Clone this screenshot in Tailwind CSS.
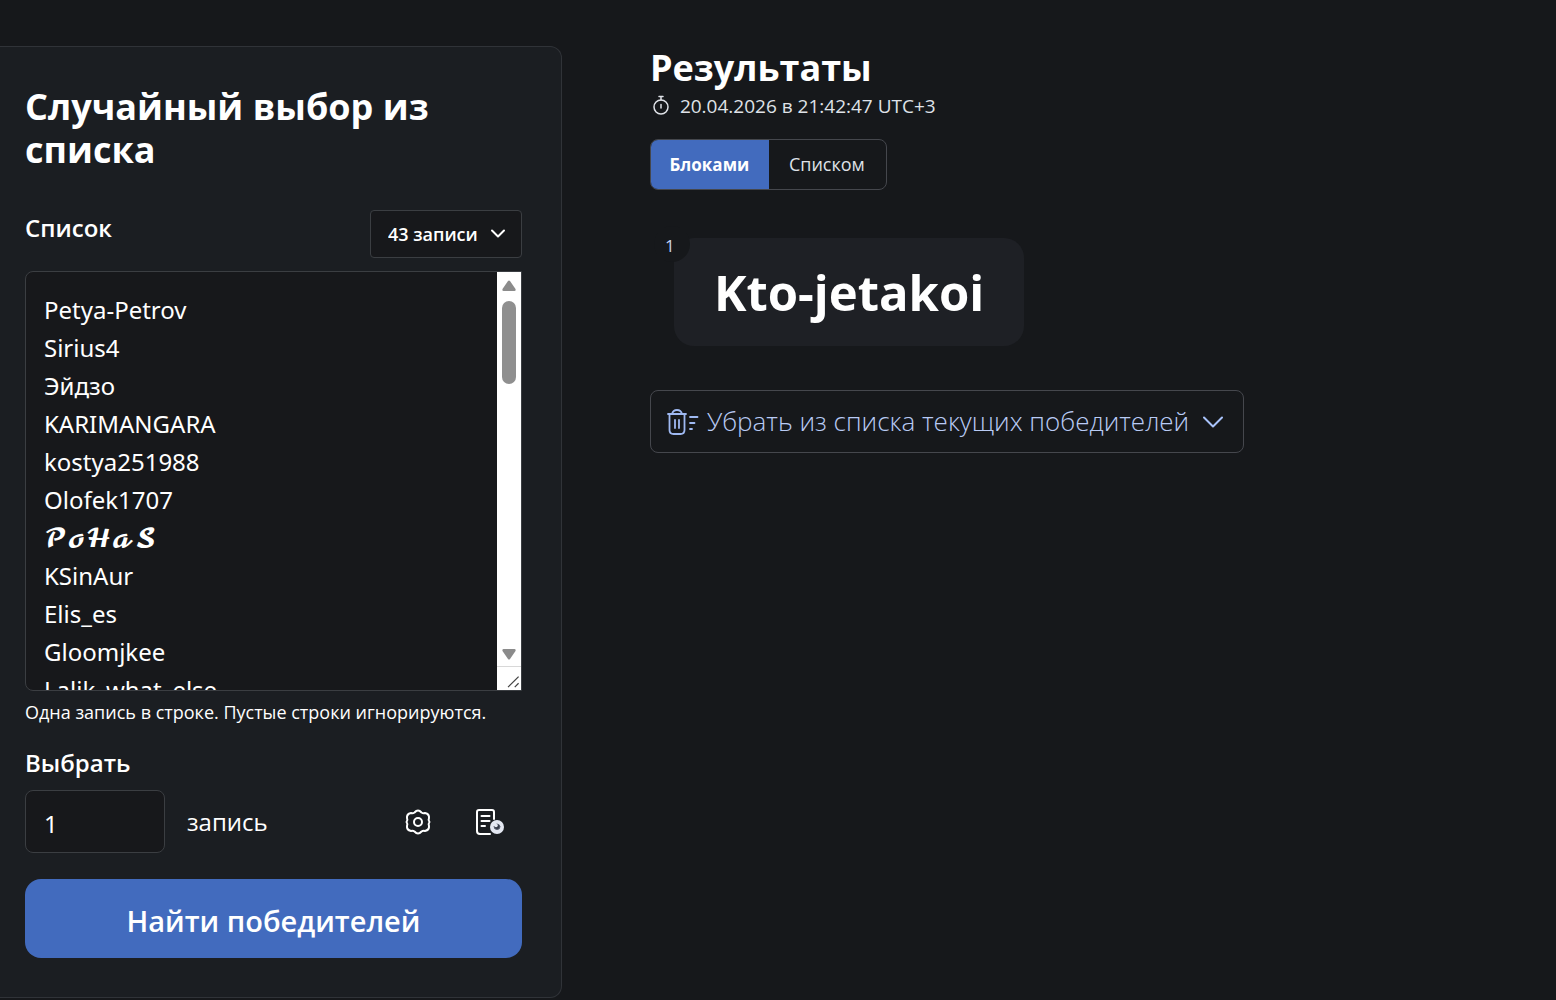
<!DOCTYPE html>
<html lang="ru">
<head>
  <meta charset="utf-8">
  <meta name="viewport" content="width=device-width, initial-scale=1">
  <title>Случайный выбор из списка</title>
  <script src="https://cdn.jsdelivr.net/npm/@tailwindcss/browser@4"></script>
</head>
<body class="min-h-screen bg-[#16181b] font-['Open_Sans','Noto_Sans',sans-serif] text-white">
  <div class="grid grid-cols-[13fr_23fr] pt-[46px]">

    <!-- Form -->
    <form class="rounded-r-xl border border-l-0 border-[#303338] bg-[#1b1e22] pt-[38px] pr-[39px] pb-[39px] pl-[25px]">
      <h1 class="text-[36px] leading-[43px] font-bold">Случайный выбор из списка</h1>

      <div class="mt-[39px] flex items-start justify-between">
        <label for="list" class="text-[24px] leading-9 font-semibold">Список</label>
        <div class="relative">
          <select aria-label="Количество записей" class="h-12 w-[152px] appearance-none rounded-sm border border-[#3b3e42] bg-[#17181b] pl-[17px] text-[18px] font-semibold">
            <option>43 записи</option>
          </select>
          <svg class="pointer-events-none absolute top-4 right-4 h-4 w-4" viewBox="0 0 16 16" fill="none" stroke="white" stroke-width="2" stroke-linecap="round" stroke-linejoin="round"><path d="M2 4.500l6 6 6-6"/></svg>
        </div>
      </div>

      <div class="mt-[13px] flex h-[420px] overflow-hidden rounded-l-lg border border-[#3b3e42] bg-[#17181b]">
        <textarea id="list" spellcheck="false" class="min-w-0 flex-1 resize-none overflow-hidden pt-[19px] pl-[18px] font-['Noto_Sans','DejaVu_Math_TeX_Gyre',sans-serif] text-[24px] leading-[38px] outline-none">Petya-Petrov
Sirius4
Эйдзо
KARIMANGARA
kostya251988
Olofek1707
𝓟𝓸𝓗𝓪𝓢
KSinAur
Elis_es
Gloomjkee
Lalik_what_else</textarea>
        <!-- Scrollbar -->
        <div class="flex w-6 flex-col items-center bg-white pt-2">
          <svg class="h-3 w-[14px]" viewBox="0 0 14 12" fill="#8b8b8b"><path d="M6 1Q7 0 8 1L13.500 9Q14 11 12.500 11H1.500Q0 11 .5 9Z"/></svg>
          <div class="mt-[9px] h-[83px] w-[14px] rounded-full bg-[#8f8f8f]"></div>
          <svg class="mt-auto mb-[6px] h-3 w-[14px]" viewBox="0 0 14 12" fill="#8b8b8b"><path d="M6 11Q7 12 8 11L13.500 3Q14 1 12.500 1H1.500Q0 1 .5 3Z"/></svg>
          <svg class="h-6 w-6 border-t border-[#d8d8d8]" viewBox="0 0 24 24" stroke="#444" stroke-width="1.300"><path d="M11 21L22 10M18 21l4-4"/></svg>
        </div>
      </div>
      <p class="mt-[9px] text-[18px] leading-6 font-medium">Одна запись в строке. Пустые строки игнорируются.</p>

      <label for="count" class="mt-5 block text-[24px] leading-[38px] font-semibold">Выбрать</label>
      <div class="mt-2 flex items-center">
        <input id="count" type="text" inputmode="numeric" value="1" class="h-[63px] w-[140px] rounded-lg border border-[#3b3e42] bg-[#17181b] px-[18px] pt-1 font-['Noto_Sans',sans-serif] text-[24px]">
        <span class="ml-[22px] text-[24px] leading-[38px]">запись</span>
        <button type="button" aria-label="Настройки" class="ml-auto p-1">
          <svg class="h-7 w-7" viewBox="0 0 28 28" fill="none" stroke="white" stroke-width="2" stroke-linejoin="round"><path d="M10.500 4.500Q14 .5 17.500 4.500Q19 5.500 21 5Q25.500 6 25 10Q24 12 25.500 14Q24 16 25 18Q25.500 22 21 23Q19 22.500 17.500 23.500Q14 27.500 10.500 23.500Q9 22.500 7 23Q2.500 22 3 18Q4 16 2.500 14Q4 12 3 10Q2.500 6 7 5Q9 5.500 10.500 4.500Z"/><circle cx="14" cy="14" r="4"/></svg>
        </button>
        <button type="button" aria-label="Просмотр протокола" class="mr-[14px] ml-9 p-1">
          <svg class="h-7 w-7" viewBox="0 0 28 28" fill="none" stroke="white" stroke-width="2" stroke-linecap="round" stroke-linejoin="round"><path d="M18 11V4Q18 2 16 2H3Q1 2 1 4V23Q1 26 4 26H14M5.500 8H13.500M5.500 13H13.500M5.500 18H9"/><circle cx="21" cy="19" r="7" fill="#e4e8f2" stroke="none"/><path d="M18 18.500a3 3 0 0 0 6 0a3 3 0 0 0-3-2.500" fill="#343a48" stroke="#5a6070" stroke-width="1"/><circle cx="20" cy="17.500" r="1.800" fill="#e4e8f2" stroke="none"/></svg>
        </button>
      </div>

      <button type="button" class="mt-[26px] h-[79px] w-full rounded-2xl bg-[#426bbe] pt-1 text-[29px] font-semibold">Найти победителей</button>
    </form>

    <!-- Results -->
    <section class="pl-[88px]">
      <h2 class="text-[36px] leading-[43px] font-bold">Результаты</h2>
      <p class="mt-[5px] flex items-center text-[19px] leading-6 text-[#dfe2e8]">
        <svg class="mr-[9px] ml-px h-[22px] w-5" viewBox="0 0 20 22" fill="none" stroke="#dfe2e8" stroke-width="1.500" stroke-linecap="round"><circle cx="10" cy="12" r="7"/><path d="M8 1.500h4M10 2v3M10 9.500v3.500"/></svg>
        20.04.2026 в 21:42:47 UTC+3
      </p>

      <div class="mt-[21px] inline-flex h-[51px] overflow-hidden rounded-lg border border-[#45474d] text-[18px]">
        <button type="button" class="-m-px w-[119px] bg-[#426bbe] text-[17px] font-bold">Блоками</button>
        <button type="button" class="w-[118px] text-[#dfe2e8]">Списком</button>
      </div>

      <ol class="mt-12 flex">
        <li class="relative ml-6 rounded-[20px] bg-[#1e2025] px-10 py-[22px] text-[49px] leading-[64px] font-bold">
          <span class="absolute -top-3 -left-5 flex h-9 w-9 justify-center rounded-full bg-[#16181b] pt-2 pr-1 text-[17px] leading-6 font-normal text-[#c5d3f0]">1</span>
          Kto-jetakoi
        </li>
      </ol>

      <button type="button" class="mt-11 flex h-[63px] items-center rounded-lg border border-[#45474d] px-4 text-[26px] font-light text-[#b9cbf5]">
        <svg class="mr-2 h-7 w-8" viewBox="0 0 32 28" fill="none" stroke="#9fb9f2" stroke-width="1.800" stroke-linecap="round" stroke-linejoin="round"><path d="M1 6H19M5 6Q6 2 10 2T15 6M2.500 6V22Q2.500 26 6.500 26H13.500Q17.500 26 17.500 22V6M8 12V20M12 12V20M23 9H30.500M23 15H27.500M23 21H25"/></svg>
        Убрать из списка текущих победителей
        <svg class="mr-1 ml-[14px] h-5 w-5" viewBox="0 0 20 20" fill="none" stroke="#a9c3fb" stroke-width="2" stroke-linecap="round" stroke-linejoin="round"><path d="M1 5.500l9 9 9-9"/></svg>
      </button>
    </section>
  </div>
</body>
</html>
